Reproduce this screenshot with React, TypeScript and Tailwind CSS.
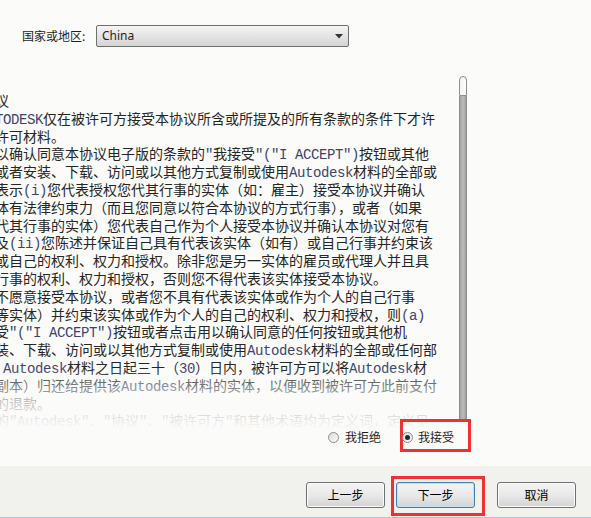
import * as React from "react";

// visible lines of the licence text (left edge is cut by the panel)
const licenseLines: string[] = [
  "议",
  "TODESK仅在被许可方接受本协议所含或所提及的所有条款的条件下才许",
  "许可材料。",
  "以确认同意本协议电子版的条款的\"我接受\"(\"I ACCEPT\")按钮或其他",
  "或者安装、下载、访问或以其他方式复制或使用Autodesk材料的全部或",
  "表示(i)您代表授权您代其行事的实体（如：雇主）接受本协议并确认",
  "体有法律约束力（而且您同意以符合本协议的方式行事），或者（如果",
  "代其行事的实体）您代表自己作为个人接受本协议并确认本协议对您有",
  "及(ii)您陈述并保证自己具有代表该实体（如有）或自己行事并约束该",
  "或自己的权利、权力和授权。除非您是另一实体的雇员或代理人并且具",
  "行事的权利、权力和授权，否则您不得代表该实体接受本协议。",
  "不愿意接受本协议，或者您不具有代表该实体或作为个人的自己行事",
  "等实体）并约束该实体或作为个人的自己的权利、权力和授权，则(a)",
  "受\"(\"I ACCEPT\")按钮或者点击用以确认同意的任何按钮或其他机",
  "装、下载、访问或以其他方式复制或使用Autodesk材料的全部或任何部",
  " Autodesk材料之日起三十（30）日内，被许可方可以将Autodesk材",
  "副本）归还给提供该Autodesk材料的实体，以便收到被许可方此前支付",
  "的退款。",
  "的\"Autodesk\"、\"协议\"、\"被许可方\"和其他术语均为定义词，定义见",
];

function LicenseLine({ text }: { text: string }) {
  const parts = text.split(/([ -~]+)/).filter((p) => p.length > 0);
  return (
    <div className="h-[17.8px] leading-[17.8px] whitespace-pre text-[14px] text-[#262626]">
      {parts.map((p, i) =>
        /^[ -~]+$/.test(p) ? (
          <span
            key={i}
            className="font-['Liberation_Mono',monospace] tracking-[-0.4px] text-[#3b4470]"
          >
            {p}
          </span>
        ) : (
          <span key={i}>{p}</span>
        )
      )}
    </div>
  );
}

function Radio({ checked }: { checked?: boolean }) {
  return (
    <span className="flex h-[11px] w-[11px] shrink-0 items-center justify-center rounded-full border border-[#8b8c8c] bg-gradient-to-br from-[#dcdcdc] to-[#fbfbfb]">
      {checked && <span className="h-[5px] w-[5px] rounded-full bg-[#262626]" />}
    </span>
  );
}

function DialogButton({ label, focused }: { label: string; focused?: boolean }) {
  return (
    <button
      className={`flex h-[26px] w-[79px] items-center justify-center rounded-[3px] border bg-gradient-to-b from-[#f4f4f4] via-[#e9e9e9] to-[#d3d3d3] text-[12px] text-black ${
        focused
          ? "border-[#3c7fb1] shadow-[inset_0_0_0_1px_#bfe3f5]"
          : "border-[#707070] shadow-[inset_0_0_0_1px_#fbfbfb]"
      }`}
    >
      {label}
    </button>
  );
}

export default function App() {
  return (
    <div className="flex h-[518px] w-[591px] flex-col overflow-hidden bg-[#fbfbf9] font-['Noto_Sans_CJK_SC',sans-serif]">
      {/* country row */}
      <div className="mt-[25px] flex h-[22px] items-center">
        <span className="ml-[22px] w-[74px] text-[12px] text-[#1e1e1e]">国家或地区:</span>
        <div className="flex h-[22px] w-[253px] items-center justify-between rounded-[2px] border border-[#6f6f6f] bg-gradient-to-b from-[#f5f5f5] to-[#d4d4d4] pl-[5px] pr-[5px]">
          <span className="font-['Noto_Sans',sans-serif] text-[12px] text-[#1e1e1e]">China</span>
          <svg width="8" height="5" viewBox="0 0 8 5">
            <path d="M0 0 L8 0 L4 4.5 Z" fill="#333" />
          </svg>
        </div>
      </div>

      {/* licence text + scrollbar */}
      <div className="mt-[29px] flex h-[343px]">
        <div className="relative w-[459px] overflow-x-clip pt-[16px]">
          <div className="-ml-[5px]">
            {licenseLines.map((l, i) => (
              <LicenseLine key={i} text={l} />
            ))}
          </div>
          <div className="absolute left-0 right-0 top-[292px] h-[62px] bg-gradient-to-b from-[#fbfbf9]/0 via-[#fbfbf9]/70 to-[#fbfbf9]" />
        </div>
        <div className="flex w-[8px] flex-col">
          <div className="h-[20px] rounded-t-[4px] border border-[#8e8e8e] bg-gradient-to-r from-[#f2f2f2] to-[#ffffff]" />
          <div className="flex-1 border-x border-[#8d8d8d] bg-gradient-to-r from-[#a3a3a3] via-[#bdbdbd] to-[#a0a0a0]" />
        </div>
      </div>

      {/* accept / decline */}
      <div className="relative flex h-[33px] items-center pl-[328px] text-[12px] text-[#1e1e1e]">
        <div className="mt-[3px] flex items-center gap-[6px]">
          <Radio />
          <span>我拒绝</span>
        </div>
        <div className="ml-[19px] flex h-[33px] w-[71px] items-center gap-[5px] border-[3px] border-[#ee3232] pt-[3px]">
          <span className="-ml-[1px]">
            <Radio checked />
          </span>
          <span>我接受</span>
        </div>
      </div>

      <div className="h-[14px]" />

      {/* bottom buttons */}
      <div className="flex h-[52px] items-start border-b border-[#a9c5e6] bg-[#f1f1ed] pl-[306px] pt-[10px]">
        <div className="mt-[6px]">
          <DialogButton label="上一步" />
        </div>
        <div className="ml-[6px] border-[3px] border-[#ee3232] pb-[5px] pl-[2px] pr-[7px] pt-[3px]">
          <DialogButton label="下一步" focused />
        </div>
        <div className="ml-[12px] mt-[6px]">
          <DialogButton label="取消" />
        </div>
      </div>
    </div>
  );
}
